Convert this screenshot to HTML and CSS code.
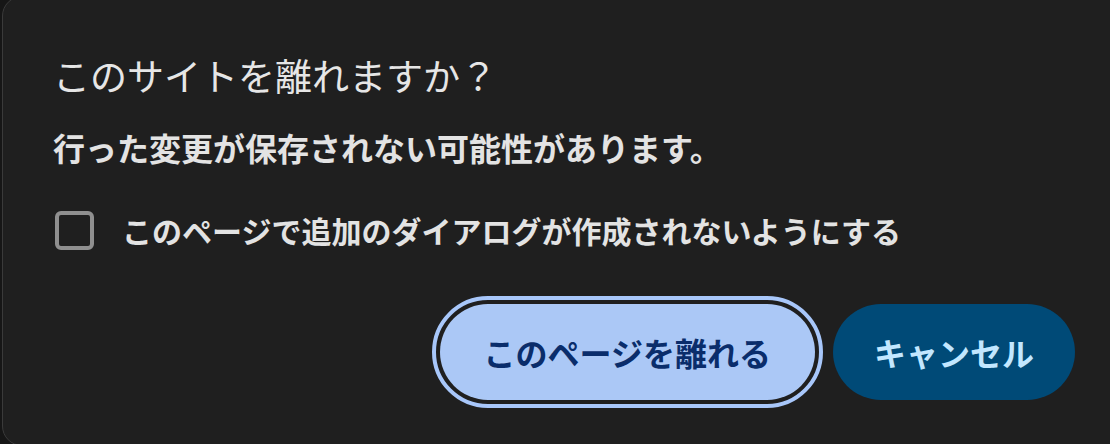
FILE: index.html
```html
<!DOCTYPE html>
<html lang="ja">
<head>
<meta charset="utf-8">
<title>このサイトを離れますか？</title>
<link rel="stylesheet" href="styles.css">
</head>
<body>
<div class="dialog">
  <h1 class="title">このサイトを離れますか？</h1>
  <p class="message">行った変更が保存されない可能性があります。</p>
  <label class="option">
    <span class="checkbox"></span>
    <span class="option-text">このページで追加のダイアログが作成されないようにする</span>
  </label>
  <div class="actions">
    <button class="btn btn-primary">このページを離れる</button>
    <button class="btn btn-tonal">キャンセル</button>
  </div>
</div>
</body>
</html>
```
FILE: styles.css
```css
html, body {
  margin: 0;
  padding: 0;
  overflow: hidden;
  background: #161616;
  font-family: "Noto Sans CJK JP", "Noto Sans", sans-serif;
}

.dialog {
  box-sizing: border-box;
  margin: -4px 0 0 2px;
  width: 1130px;
  height: 450px;
  padding: 56px 56px 0 50px;
  background: #1f1f1f;
  border: 1px solid #3a3a3a;
  border-radius: 20px;
  color: #e3e3e3;
}

.title {
  margin: 0;
  font-size: 37px;
  font-weight: 400;
  line-height: 44px;
  color: #e6e6e6;
}

.message {
  margin: 30px 0 0;
  font-size: 32px;
  font-weight: 700;
  line-height: 40px;
  color: #e3e3e3;
}

.option {
  display: flex;
  align-items: center;
  gap: 28px;
  margin-top: 43px;
  height: 40px;
  padding-left: 2px;
}

.checkbox {
  box-sizing: border-box;
  width: 39px;
  height: 39px;
  border: 4px solid #8f8f8f;
  border-radius: 6px;
  flex: none;
}

.option-text {
  font-size: 30px;
  font-weight: 700;
  line-height: 40px;
  color: #e3e3e3;
}

.actions {
  display: flex;
  justify-content: flex-end;
  align-items: center;
  gap: 18px;
  margin-top: 54px;
}

.btn {
  height: 96px;
  border: none;
  border-radius: 48px;
  font-family: inherit;
  font-size: 32px;
  font-weight: 700;
  line-height: 1;
}

.btn-primary {
  padding: 0 44px;
  background: #abc8f6;
  color: #0a2d6b;
  outline: 4px solid #a8c7fa;
  outline-offset: 4px;
}

.btn-tonal {
  padding: 0 41px;
  background: #004a77;
  color: #c2e7ff;
}
```
